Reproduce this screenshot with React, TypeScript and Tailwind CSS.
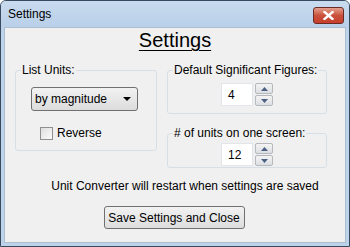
import React from "react";

const ui = { fontFamily: '"Liberation Sans", Arial, sans-serif' };

function Spinner() {
  return (
    <div className="flex flex-col gap-[1px] ml-[2px]">
      <div className="w-[18px] h-[11px] border border-[#b5b8bd] rounded-[2px] bg-gradient-to-b from-[#f4f4f4] to-[#dcdfe3] flex items-center justify-center">
        <svg width="7" height="4" viewBox="0 0 7 4">
          <path d="M0 4 L3.5 0 L7 4 Z" fill="#4d6185" />
        </svg>
      </div>
      <div className="w-[18px] h-[11px] border border-[#b5b8bd] rounded-[2px] bg-gradient-to-b from-[#f4f4f4] to-[#dcdfe3] flex items-center justify-center">
        <svg width="7" height="4" viewBox="0 0 7 4">
          <path d="M0 0 L7 0 L3.5 4 Z" fill="#4d6185" />
        </svg>
      </div>
    </div>
  );
}

function NumberBox({ value }: { value: string }) {
  return (
    <div className="flex items-center justify-center">
      <div className="w-[32px] h-[23px] bg-white border border-[#e2e6ea] flex items-center pl-[6px] text-[12px] text-black">
        {value}
      </div>
      <Spinner />
    </div>
  );
}

function Group({ label, className, children }: { label: string; className: string; children: React.ReactNode }) {
  return (
    <fieldset className={`border border-[#d5dfe5] rounded-[3px] ${className}`}>
      <legend className="ml-[5px] px-[1px] text-[12px] leading-[14px] text-black">{label}</legend>
      {children}
    </fieldset>
  );
}

export default function App() {
  return (
    <div className="w-[350px] h-[247px] border border-[#3a4a5e] rounded-t-[6px] bg-[#bcd3ea] flex flex-col overflow-hidden" style={ui}>
      <div className="h-[26px] shrink-0 flex items-center justify-between pl-[7px] pr-[5px] bg-gradient-to-b from-[#c9dbee] to-[#b9d0e9]">
        <span className="text-[12px] text-black">Settings</span>
        <div className="w-[31px] h-[17px] mt-[2px] rounded-[3px] border border-[#6b2a24] bg-gradient-to-b from-[#e3a08f] via-[#c9503b] to-[#c6402c] flex items-center justify-center">
          <svg width="11" height="9" viewBox="0 0 11 9">
            <path d="M1.5 1 L9.5 8 M9.5 1 L1.5 8" stroke="#ffffff" strokeWidth="2.4" strokeLinecap="square" />
          </svg>
        </div>
      </div>
      <div className="mx-[3px] h-[216px] bg-[#f0f0f0] border border-[#aabdd1] flex flex-col">
        <div className="h-[26px] text-center leading-[24px] text-[20px] text-black">
          <span className="underline underline-offset-[3px] decoration-[1px]">Settings</span>
        </div>
        <div className="flex mt-[9px] pl-[10px]">
          <Group label="List Units:" className="w-[142px] h-[88px]">
            <div className="pl-[15px] pt-[10px]">
              <div className="w-[107px] h-[24px] border border-[#707070] rounded-[3px] bg-gradient-to-b from-[#f2f2f2] to-[#dcdcdc] flex items-center justify-between pl-[3px] pr-[6px] text-[12px] text-black">
                <span>by magnitude</span>
                <svg width="8" height="4" viewBox="0 0 8 4">
                  <path d="M0 0 L8 0 L4 4 Z" fill="#000" />
                </svg>
              </div>
              <div className="flex items-center gap-[4px] mt-[13px] pl-[9px] text-[12px] text-black">
                <div className="w-[13px] h-[13px] border border-[#8f8f8f] bg-gradient-to-br from-[#dedede] to-[#fafafa]" />
                <span>Reverse</span>
              </div>
            </div>
          </Group>
          <div className="flex flex-col ml-[10px]">
            <Group label="Default Significant Figures:" className="w-[160px] h-[51px]">
              <div className="pt-[6px]">
                <NumberBox value="4" />
              </div>
            </Group>
            <Group label="# of units on one screen:" className="w-[160px] h-[42px] mt-[12px]">
              <div className="pt-[3px]">
                <NumberBox value="12" />
              </div>
            </Group>
          </div>
        </div>
        <div className="mt-[11px] pl-[20px] text-center text-[12px] text-black leading-[14px]">
          Unit Converter will restart when settings are saved
        </div>
        <div className="flex justify-center mt-[13px] pr-[2px]">
          <button className="w-[141px] h-[23px] border border-[#707070] rounded-[3px] bg-gradient-to-b from-[#f2f2f2] to-[#dddddd] text-[12px] text-black">
            Save Settings and Close
          </button>
        </div>
      </div>
    </div>
  );
}
